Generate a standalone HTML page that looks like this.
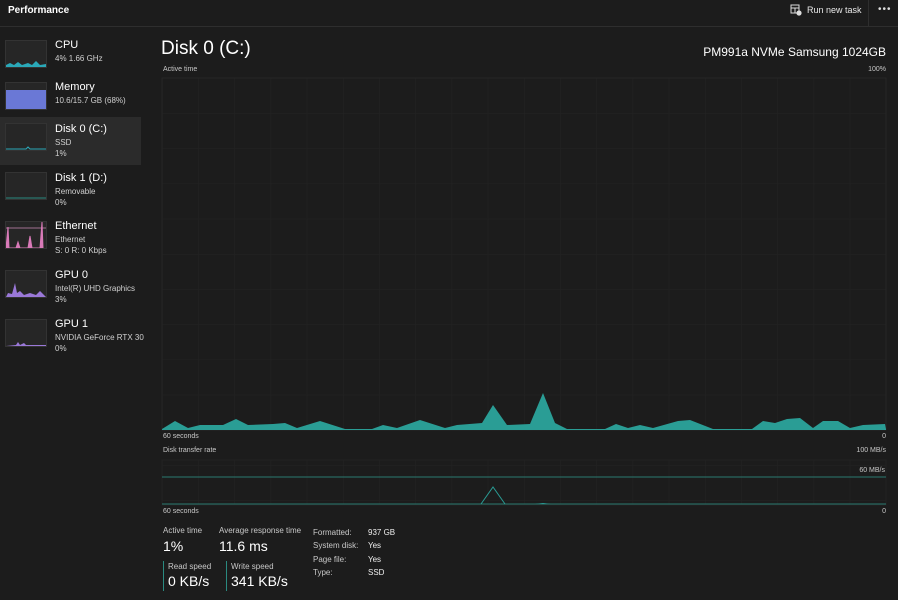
<!DOCTYPE html>
<html><head><meta charset="utf-8"><style>
*{margin:0;padding:0;box-sizing:border-box}
body{width:898px;height:600px;background:#1c1c1c;color:#fff;font-family:"Liberation Sans",sans-serif;position:relative;overflow:hidden}
.a{position:absolute;white-space:nowrap}
.s{font-size:8px;color:#c8c8c8}
.thumb{position:absolute;left:5px;width:42px;height:28px;background:#262626;border:1px solid #333}
.t{font-size:11px;color:#fff}
.sub{font-size:8px;color:#d0d0d0;line-height:11px}
</style></head><body>
<div class="a" style="left:8px;top:5px;font-size:10px;font-weight:bold">Performance</div>
<div class="a" style="left:0;top:26px;width:898px;height:1px;background:#2e2e2e"></div>
<div class="a" style="left:868px;top:0;width:1px;height:26px;background:#2e2e2e"></div>
<svg class="a" style="left:790px;top:4px" width="12" height="12" viewBox="0 0 12 12"><rect x="1" y="1" width="8" height="8" fill="none" stroke="#ddd"/><line x1="1" y1="4" x2="9" y2="4" stroke="#ddd"/><line x1="5" y1="4" x2="5" y2="9" stroke="#ddd"/><circle cx="9" cy="9" r="2.6" fill="#ddd"/></svg>
<div class="a" style="left:807px;top:5px;font-size:9px;color:#e8e8e8">Run new task</div>
<div class="a" style="left:878px;top:4px;font-size:10px;color:#ddd;letter-spacing:1px">•••</div>

<div class="a" style="left:0;top:117px;width:141px;height:48px;background:#2b2b2b"></div>
<div class="thumb" style="top:40px"><svg width="40" height="26"><polyline points="0,24 4,22 8,24 12,21 16,24 22,22 26,24 30,20 34,24 40,23 40,26 0,26" fill="#2aa8b8"/></svg></div>
<div class="a t" style="left:55px;top:39px">CPU</div><div class="a sub" style="left:55px;top:53px">4% 1.66 GHz</div>
<div class="thumb" style="top:82px"><div style="margin-top:7px;height:19px;background:#6a78d6"></div></div>
<div class="a t" style="left:55px;top:81px">Memory</div><div class="a sub" style="left:55px;top:95px">10.6/15.7 GB (68%)</div>
<div class="thumb" style="top:123px;background:#262626"><svg width="40" height="26"><polyline points="0,25 20,25 22,23 24,25 40,25" stroke="#2aa8b8" fill="none"/></svg></div>
<div class="a t" style="left:55px;top:123px">Disk 0 (C:)</div><div class="a sub" style="left:55px;top:137px">SSD<br>1%</div>
<div class="thumb" style="top:172px"><svg width="40" height="26"><line x1="0" y1="25" x2="40" y2="25" stroke="#2a8a80"/></svg></div>
<div class="a t" style="left:55px;top:172px">Disk 1 (D:)</div><div class="a sub" style="left:55px;top:186px">Removable<br>0%</div>
<div class="thumb" style="top:221px"><svg width="40" height="26"><line x1="0" y1="6" x2="40" y2="6" stroke="#a07090"/><polyline points="0,26 2,5 3,26 10,26 12,20 14,26 22,26 24,14 26,26 34,26 36,0 37,26" fill="#d97ab8" stroke="#d97ab8"/></svg></div>
<div class="a t" style="left:55px;top:220px">Ethernet</div><div class="a sub" style="left:55px;top:234px">Ethernet<br>S: 0 R: 0 Kbps</div>
<div class="thumb" style="top:270px"><svg width="40" height="26"><polyline points="0,26 2,22 6,23 9,12 11,22 14,20 18,24 24,22 30,24 34,20 38,24 40,26" fill="#9a78d8"/></svg></div>
<div class="a t" style="left:55px;top:269px">GPU 0</div><div class="a sub" style="left:55px;top:283px">Intel(R) UHD Graphics<br>3%</div>
<div class="thumb" style="top:319px"><svg width="40" height="26"><polyline points="0,26 10,25 12,22 14,25 18,23 20,25 40,25 40,26" fill="#9a78d8"/></svg></div>
<div class="a t" style="left:55px;top:318px">GPU 1</div><div class="a sub" style="left:55px;top:332px">NVIDIA GeForce RTX 30<br>0%</div>

<div class="a" style="left:161px;top:38px;font-size:19px">Disk 0 (C:)</div>
<div class="a" style="right:12px;top:45px;font-size:12px">PM991a NVMe Samsung 1024GB</div>
<div class="a s" style="left:163px;top:66px;font-size:7px">Active time</div>
<div class="a s" style="right:12px;top:66px;font-size:7px">100%</div>

<svg class="a" style="left:0;top:0" width="898" height="600">
<defs><pattern id="g" x="162" y="78" width="36.2" height="35.2" patternUnits="userSpaceOnUse"><path d="M0 0H36.2M0 0V35.2" stroke="#232323" fill="none"/></pattern></defs>
<rect x="162" y="78" width="724" height="352" fill="url(#g)" stroke="#262626"/>
<polygon fill="#2a9d95" points="162,429 175,421 188,428 200,425 223,425 236,419 248,425 273,424 285,423 297,428 320,421 345,429 372,429 383,425 397,428 420,420 445,428 457,425 482,423 493,405 507,425 530,424 543,393 555,423 567,429 605,429 616,424 628,428 640,425 653,428 678,421 690,420 713,429 752,429 763,421 775,423 787,419 800,418 813,428 823,421 838,421 850,428 863,425 885,424 886,429"/>
<line x1="162" y1="429.5" x2="886" y2="429.5" stroke="#2a9d95"/>
<rect x="162" y="460" width="724" height="45" fill="url(#g)" stroke="#222"/>
<line x1="162" y1="477" x2="886" y2="477" stroke="#2a7a70"/>
<line x1="162" y1="504" x2="886" y2="504" stroke="#2a7a70"/>
<polyline points="481,504 493,487 505,504" fill="none" stroke="#2a9d95"/>
<polygon points="535,504 543,503 551,504" fill="#2a9d95"/>
</svg>
<div class="a s" style="left:163px;top:433px;font-size:7px">60 seconds</div>
<div class="a s" style="right:12px;top:433px;font-size:7px">0</div>
<div class="a s" style="left:163px;top:447px;font-size:7px">Disk transfer rate</div>
<div class="a s" style="right:12px;top:447px;font-size:7px">100 MB/s</div>
<div class="a s" style="right:13px;top:467px;font-size:7px">60 MB/s</div>
<div class="a s" style="left:163px;top:508px;font-size:7px">60 seconds</div>
<div class="a s" style="right:12px;top:508px;font-size:7px">0</div>

<div class="a s" style="left:163px;top:526px">Active time</div>
<div class="a" style="left:163px;top:538px;font-size:14px">1%</div>
<div class="a s" style="left:219px;top:526px">Average response time</div>
<div class="a" style="left:219px;top:538px;font-size:14px">11.6 ms</div>
<div class="a" style="left:163px;top:561px;width:1px;height:30px;background:#2a8a80"></div>
<div class="a s" style="left:168px;top:562px">Read speed</div>
<div class="a" style="left:168px;top:573px;font-size:14px">0 KB/s</div>
<div class="a" style="left:226px;top:561px;width:1px;height:30px;background:#2a8a80"></div>
<div class="a s" style="left:231px;top:562px">Write speed</div>
<div class="a" style="left:231px;top:573px;font-size:14px">341 KB/s</div>
<div class="a s" style="left:313px;top:526px;line-height:13.3px">Formatted:<br>System disk:<br>Page file:<br>Type:</div>
<div class="a s" style="left:368px;top:526px;line-height:13.3px;color:#eee">937 GB<br>Yes<br>Yes<br>SSD</div>
</body></html>
